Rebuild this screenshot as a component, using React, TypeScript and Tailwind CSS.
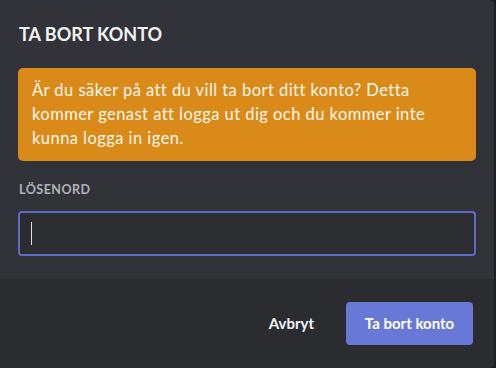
import React from "react";

export default function App() {
  return (
    <div
      className="w-[496px] h-[368px] bg-[#1e1f22] flex overflow-hidden"
      style={{ fontFamily: "Lato, 'Noto Sans', sans-serif" }}
    >
      <div className="w-[494px] h-[368px] rounded-r-[5px] overflow-hidden flex flex-col bg-[#313338]">
        <div className="flex flex-col px-[18px] pt-[24px] pb-[23px]">
          <h1 className="text-[18px] leading-[20px] font-bold text-[#f2f3f5] pl-[1px]">
            TA BORT KONTO
          </h1>
          <div className="mt-[24px] bg-[#da8a19] rounded-[5px] px-[14px] py-[10px] text-[16.5px] leading-[24px] tracking-[0.45px] text-[#fdf6ec] h-[93px]">
            Är du säker på att du vill ta bort ditt konto? Detta kommer genast att logga ut dig och du kommer inte kunna logga in igen.
          </div>
          <label className="mt-[21px] text-[12.5px] leading-[16px] font-bold tracking-[0.5px] text-[#b0b3b8] pl-[1px]">
            LÖSENORD
          </label>
          <div className="mt-[13px] h-[45px] rounded-[4px] border-2 border-[#5c6bc7] bg-[#2b2d31] flex items-center px-[11px]">
            <div className="w-[1px] h-[23px] bg-[#dcddde]" />
          </div>
        </div>
        <div className="flex-1 bg-[#2a2c30] flex items-center justify-end px-[21px] gap-[32px]">
          <span className="text-[15px] font-bold text-[#f2f3f5]">Avbryt</span>
          <button className="w-[127px] h-[43px] rounded-[4px] bg-[#6878d6] text-[15px] font-bold text-white">
            Ta bort konto
          </button>
        </div>
      </div>
    </div>
  );
}
